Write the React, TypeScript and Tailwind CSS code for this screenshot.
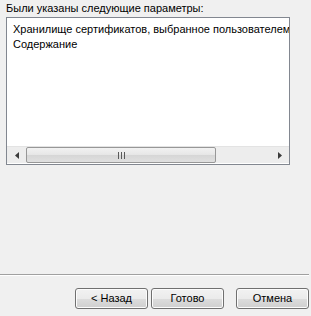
import React from 'react';

const font = { fontFamily: '"Liberation Sans", Tahoma, sans-serif' };

const WinButton: React.FC<{ label: string; className?: string }> = ({ label, className }) => (
  <button
    type="button"
    className={`h-[21px] w-[73px] rounded-[3px] border border-[#707070] text-[11px] text-black bg-[linear-gradient(#f2f2f2_0%,#ebebeb_50%,#dddddd_50%,#cfcfcf_100%)] shadow-[inset_0_0_0_1px_#fcfcfc] ${className ?? ''}`}
  >
    {label}
  </button>
);

export default function App() {
  return (
    <div className="w-[311px] h-[316px] bg-[#f0f0f0] flex flex-col text-[11px] text-black" style={font}>
      {/* Caption */}
      <div className="pl-[6px] pt-[1px] h-[17px] leading-[14px]">Были указаны следующие параметры:</div>

      {/* List box */}
      <div className="ml-[6px] w-[284px] h-[148px] border border-[#828790] bg-white flex flex-col">
        <div className="flex-1 overflow-hidden pl-[6px] pt-[4px] leading-[15px] whitespace-nowrap">
          <div>Хранилище сертификатов, выбранное пользователем</div>
          <div>Содержание</div>
        </div>
        {/* Horizontal scrollbar */}
        <div className="h-[17px] mb-[1px] flex items-stretch bg-[#ededed] border-t border-[#e3e3e3]">
          <div className="w-[19px] flex items-center justify-center">
            <svg width="4" height="7" viewBox="0 0 4 7">
              <path d="M4 0 L0 3.5 L4 7 Z" fill="#3c3c3c" />
            </svg>
          </div>
          <div className="w-[190px] rounded-[2px] border border-[#979797] bg-[linear-gradient(#f2f2f2_0%,#e6e6e6_50%,#d6d6d6_51%,#e0e0e0_100%)] flex items-center justify-center">
            <svg width="7" height="7" viewBox="0 0 7 7">
              <rect x="0" y="0" width="1" height="7" fill="#5a5a5a" />
              <rect x="3" y="0" width="1" height="7" fill="#5a5a5a" />
              <rect x="6" y="0" width="1" height="7" fill="#5a5a5a" />
            </svg>
          </div>
          <div className="flex-1" />
          <div className="w-[19px] flex items-center justify-center">
            <svg width="4" height="7" viewBox="0 0 4 7">
              <path d="M0 0 L4 3.5 L0 7 Z" fill="#3c3c3c" />
            </svg>
          </div>
        </div>
      </div>

      <div className="flex-1" />

      {/* Separator */}
      <div className="w-[309px] border-t border-[#a0a0a0] border-b border-b-white" />

      {/* Buttons */}
      <div className="flex pl-[75px] pt-[12px] pb-[7px]">
        <WinButton label="< Назад" />
        <WinButton label="Готово" className="ml-[3px]" />
        <WinButton label="Отмена" className="ml-[12px]" />
      </div>
    </div>
  );
}
